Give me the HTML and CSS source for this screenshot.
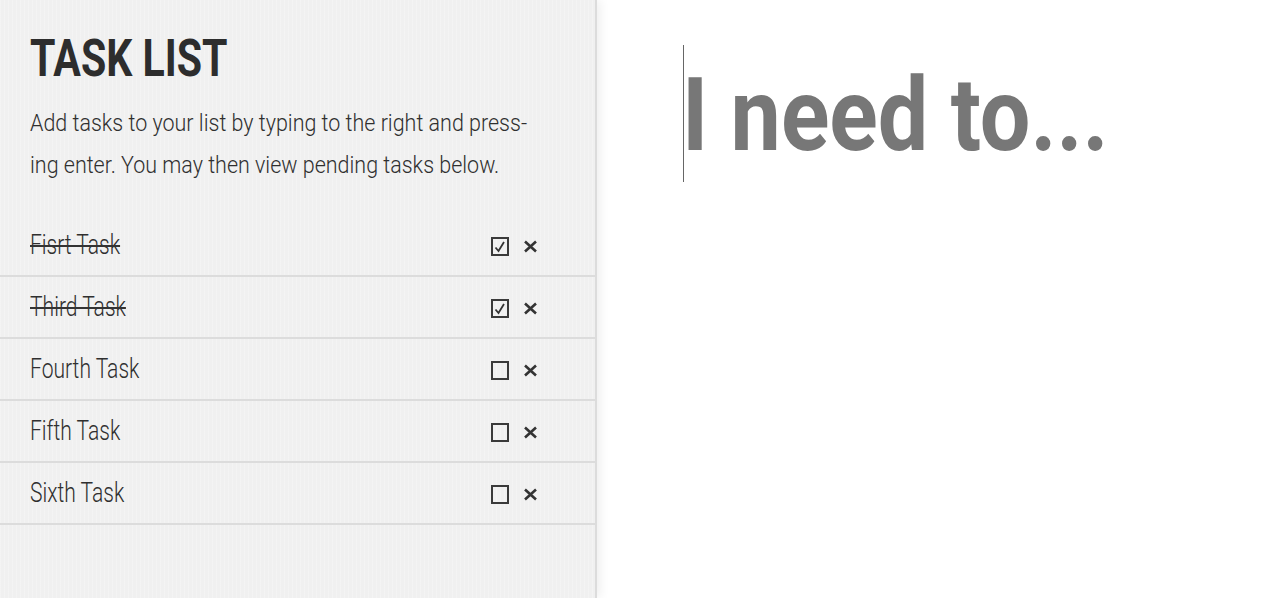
FILE: index.html
```html
<!DOCTYPE html>
<html lang="en">
<head>
<meta charset="utf-8">
<title>Task List</title>
<link rel="stylesheet" href="styles.css">
</head>
<body>
<div class="app">
  <aside class="sidebar">
    <h1 class="title"><span class="squeeze">TASK LIST</span></h1>
    <p class="intro"><span class="squeeze">Add tasks to your list by typing to the right and press-<br>ing enter. You may then view pending tasks below.</span></p>
    <ul class="tasks">
      <li class="task done">
        <span class="name"><span class="squeeze">Fisrt Task</span></span>
        <svg class="box" viewBox="0 0 18 19" width="18" height="19"><rect x="1" y="1" width="16" height="17" fill="none" stroke="#3a3a3a" stroke-width="2"/><path d="M4.5 10.5 L7.5 14 L13 5" fill="none" stroke="#333" stroke-width="1.8"/></svg>
        <svg class="del" viewBox="0 0 15 13" width="15" height="13"><path d="M2 1.5 L13 11.5 M13 1.5 L2 11.5" stroke="#333" stroke-width="2.6" stroke-linecap="butt"/></svg>
      </li>
      <li class="task done">
        <span class="name"><span class="squeeze">Third Task</span></span>
        <svg class="box" viewBox="0 0 18 19" width="18" height="19"><rect x="1" y="1" width="16" height="17" fill="none" stroke="#3a3a3a" stroke-width="2"/><path d="M4.5 10.5 L7.5 14 L13 5" fill="none" stroke="#333" stroke-width="1.8"/></svg>
        <svg class="del" viewBox="0 0 15 13" width="15" height="13"><path d="M2 1.5 L13 11.5 M13 1.5 L2 11.5" stroke="#333" stroke-width="2.6" stroke-linecap="butt"/></svg>
      </li>
      <li class="task">
        <span class="name"><span class="squeeze">Fourth Task</span></span>
        <svg class="box" viewBox="0 0 18 19" width="18" height="19"><rect x="1" y="1" width="16" height="17" fill="none" stroke="#3a3a3a" stroke-width="2"/></svg>
        <svg class="del" viewBox="0 0 15 13" width="15" height="13"><path d="M2 1.5 L13 11.5 M13 1.5 L2 11.5" stroke="#333" stroke-width="2.6" stroke-linecap="butt"/></svg>
      </li>
      <li class="task">
        <span class="name"><span class="squeeze">Fifth Task</span></span>
        <svg class="box" viewBox="0 0 18 19" width="18" height="19"><rect x="1" y="1" width="16" height="17" fill="none" stroke="#3a3a3a" stroke-width="2"/></svg>
        <svg class="del" viewBox="0 0 15 13" width="15" height="13"><path d="M2 1.5 L13 11.5 M13 1.5 L2 11.5" stroke="#333" stroke-width="2.6" stroke-linecap="butt"/></svg>
      </li>
      <li class="task">
        <span class="name"><span class="squeeze">Sixth Task</span></span>
        <svg class="box" viewBox="0 0 18 19" width="18" height="19"><rect x="1" y="1" width="16" height="17" fill="none" stroke="#3a3a3a" stroke-width="2"/></svg>
        <svg class="del" viewBox="0 0 15 13" width="15" height="13"><path d="M2 1.5 L13 11.5 M13 1.5 L2 11.5" stroke="#333" stroke-width="2.6" stroke-linecap="butt"/></svg>
      </li>
    </ul>
  </aside>
  <main class="main">
    <div class="entry"><span class="caret"></span><span class="placeholder"><span class="squeeze-big">I need to...</span></span></div>
  </main>
</div>
</body>
</html>
```

FILE: styles.css
```css
html, body {
  margin: 0;
  padding: 0;
  height: 100%;
  background: #fff;
}
body {
  font-family: "Roboto", "Liberation Sans", sans-serif;
  color: #333;
}
.app {
  display: flex;
  height: 598px;
  overflow: hidden;
}
.sidebar {
  width: 595px;
  flex: none;
  background-color: #f0f0f0;
  background-image: repeating-linear-gradient(90deg, rgba(255,255,255,0.25) 0 1px, rgba(0,0,0,0) 1px 4px);
  border-right: 2px solid #dcdcdc;
  box-shadow: 3px 0 10px rgba(0,0,0,0.07);
  position: relative;
  z-index: 1;
}
.squeeze {
  display: inline-block;
  white-space: nowrap;
  transform-origin: left center;
}
.title {
  margin: 33px 0 0 30px;
  font-size: 52px;
  line-height: 52px;
  font-weight: bold;
  color: #2d2d2d;
}
.title .squeeze {
  transform: scaleX(0.79);
}
.intro {
  margin: 17px 0 0 30px;
  font-size: 24px;
  line-height: 42px;
  font-weight: 300;
  color: #2f2f2f;
}
.intro .squeeze {
  transform: scaleX(0.895);
}
.tasks {
  list-style: none;
  margin: 29px 0 0 0;
  padding: 0;
}
.task {
  display: flex;
  align-items: center;
  height: 60px;
  padding: 0 57px 0 30px;
  border-bottom: 2px solid #dcdcdc;
  font-size: 27px;
  font-weight: 300;
}
.name {
  flex: 1;
  color: #2f2f2f;
}
.name .squeeze {
  transform: scaleX(0.78);
}
.done .name .squeeze {
  text-decoration: line-through;
  text-decoration-thickness: 2px;
  text-decoration-color: #333;
}
.box {
  display: block;
  margin: 3px 14px 0 0;
}
.del {
  display: block;
  margin-top: 3px;
}
.main {
  flex: 1;
  padding: 45px 0 0 86px;
}
.entry {
  display: flex;
  align-items: flex-start;
}
.caret {
  width: 1px;
  height: 137px;
  background: #666;
  flex: none;
}
.placeholder {
  margin-top: 4px;
  font-weight: bold;
  font-size: 102px;
  line-height: 133px;
  color: #777;
}
.squeeze-big {
  display: inline-block;
  white-space: nowrap;
  transform-origin: left center;
  transform: scaleX(0.88);
  margin-left: -2px;
}
```
